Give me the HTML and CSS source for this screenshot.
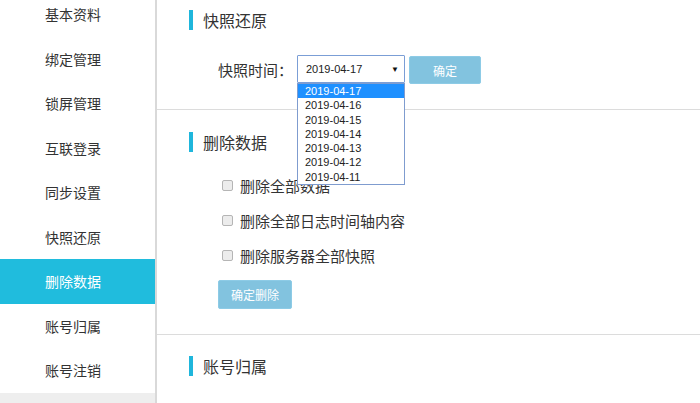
FILE: index.html
```html
<!DOCTYPE html>
<html lang="zh-CN">
<head>
<meta charset="utf-8">
<title>设置</title>
<link rel="stylesheet" href="styles.css">
</head>
<body>
<div class="page">
  <aside class="sidebar">
    <ul class="nav">
      <li class="nav-item">基本资料</li>
      <li class="nav-item">绑定管理</li>
      <li class="nav-item">锁屏管理</li>
      <li class="nav-item">互联登录</li>
      <li class="nav-item">同步设置</li>
      <li class="nav-item">快照还原</li>
      <li class="nav-item active">删除数据</li>
      <li class="nav-item">账号归属</li>
      <li class="nav-item">账号注销</li>
    </ul>
    <div class="sidebar-rest"></div>
  </aside>
  <main class="main">
    <section class="section first">
      <h2 class="title"><span class="bar"></span>快照还原</h2>
      <div class="form-row">
        <span class="label">快照时间：</span>
        <div class="select-wrap">
          <div class="select"><span>2019-04-17</span><span class="arrow">▼</span></div>
          <ul class="options">
            <li class="option selected">2019-04-17</li>
            <li class="option">2019-04-16</li>
            <li class="option">2019-04-15</li>
            <li class="option">2019-04-14</li>
            <li class="option">2019-04-13</li>
            <li class="option">2019-04-12</li>
            <li class="option">2019-04-11</li>
          </ul>
        </div>
        <button class="btn btn-ok">确定</button>
      </div>
    </section>
    <section class="section">
      <h2 class="title"><span class="bar"></span>删除数据</h2>
      <div class="checks">
        <label class="check"><span class="box"></span>删除全部数据</label>
        <label class="check"><span class="box"></span>删除全部日志时间轴内容</label>
        <label class="check"><span class="box"></span>删除服务器全部快照</label>
      </div>
      <button class="btn btn-del">确定删除</button>
    </section>
    <section class="section last">
      <h2 class="title"><span class="bar"></span>账号归属</h2>
    </section>
  </main>
</div>
</body>
</html>
```

FILE: styles.css
```css
* { box-sizing: border-box; }
html, body { margin: 0; padding: 0; background: #fff; }
body {
  font-family: "Noto Sans CJK SC", "Liberation Sans", sans-serif;
  color: #333;
  width: 700px;
  height: 403px;
  overflow: hidden;
}
.page {
  display: flex;
  height: 403px;
}
.sidebar {
  width: 157px;
  flex: none;
  border-right: 2px solid #d9d9d9;
  display: flex;
  flex-direction: column;
}
.nav {
  list-style: none;
  margin: -8px 0 0 0;
  padding: 0;
}
.nav-item {
  height: 44.5px;
  display: flex;
  align-items: center;
  padding-left: 45px;
  font-size: 14px;
  color: #333;
}
.nav-item.active {
  background: #20bcdd;
  color: #fff;
}
.sidebar-rest {
  flex: 1;
  background: #eeeeee;
}
.main {
  flex: 1;
  display: flex;
  flex-direction: column;
}
.section {
  padding: 22px 0 25px 32px;
  border-bottom: 1px solid #dcdcdc;
}
.section.first {
  padding-top: 10px;
  padding-bottom: 26px;
}
.section.last {
  border-bottom: none;
  padding-top: 21px;
}
.title {
  margin: 0;
  display: flex;
  align-items: center;
  height: 20px;
  font-size: 16px;
  font-weight: normal;
  color: #333;
}
.bar {
  width: 4px;
  height: 20px;
  background: #1fb6dc;
  margin-right: 10px;
}
.form-row {
  display: flex;
  align-items: center;
  margin-top: 25px;
  padding-left: 29px;
  height: 28px;
}
.label {
  width: 79px;
  font-size: 15px;
}
.select-wrap {
  position: relative;
  width: 108px;
  height: 28px;
}
.select {
  height: 28px;
  border: 1px solid #7b9ed6;
  border-radius: 1px;
  display: flex;
  align-items: center;
  justify-content: space-between;
  padding: 0 5px 0 8px;
  font-family: "Liberation Sans", sans-serif;
  font-size: 11px;
  color: #222;
}
.arrow {
  font-size: 8px;
  color: #111;
}
.options {
  position: absolute;
  top: 28px;
  left: 0;
  width: 108px;
  margin: 0;
  padding: 0;
  list-style: none;
  background: #fff;
  border: 1px solid #7f9ccf;
  font-family: "Liberation Sans", sans-serif;
  font-size: 11px;
  color: #222;
  z-index: 2;
}
.option {
  height: 14.3px;
  line-height: 14.3px;
  padding-left: 7px;
}
.option.selected {
  background: #1e90ff;
  color: #fff;
}
.btn {
  border: 1px solid #8dcbe6;
  background: #82c3df;
  color: #fff;
  font-family: "Noto Sans CJK SC", sans-serif;
  font-size: 12px;
  border-radius: 2px;
  padding: 0;
}
.btn-ok {
  width: 72px;
  height: 28px;
  margin-left: 4px;
  margin-top: 2px;
}
.checks {
  margin-top: 16px;
  padding-left: 33px;
  display: flex;
  flex-direction: column;
}
.check {
  height: 35px;
  display: flex;
  align-items: center;
  font-size: 15px;
  color: #333;
}
.box {
  width: 11px;
  height: 11px;
  border: 1px solid #b5b5b5;
  border-radius: 2px;
  background: #ececec;
  margin-right: 7px;
}
.btn-del {
  display: block;
  width: 74px;
  height: 29px;
  margin: 7px 0 0 29px;
}
```
